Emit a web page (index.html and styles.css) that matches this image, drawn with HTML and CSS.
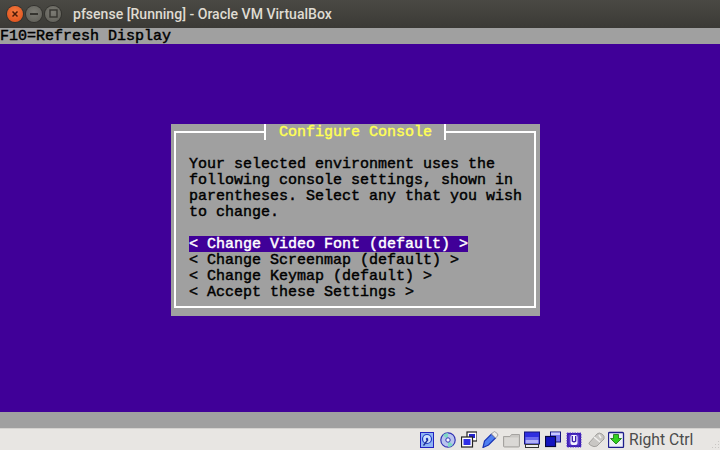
FILE: index.html
```html
<!DOCTYPE html>
<html lang="en">
<head>
<meta charset="utf-8">
<title>pfsense [Running] - Oracle VM VirtualBox</title>
<link rel="stylesheet" href="styles.css">
</head>
<body>
<div class="window">
  <header class="titlebar">
    <div class="controls">
      <span class="ctl ctl-close"><svg width="8" height="8" viewBox="0 0 8 8"><path d="M1.500 1.500l5 5M6.500 1.500l-5 5" stroke="#4a1a08" stroke-width="1.500"/></svg></span>
      <span class="ctl"><svg width="10" height="8" viewBox="0 0 10 8"><path d="M1 4h8" stroke="#35342f" stroke-width="2"/></svg></span>
      <span class="ctl"><svg width="9" height="9" viewBox="0 0 9 9"><rect x="1" y="1" width="7" height="7" fill="none" stroke="#35342f" stroke-width="1.400"/></svg></span>
    </div>
    <div class="title">pfsense [Running] - Oracle VM VirtualBox</div>
  </header>
  <main class="console">
    <div class="row row-bar">F10=Refresh Display</div>
    <div class="desktop">
      <section class="dialog">
        <div class="frame">
          <h1 class="dialog-title">Configure Console</h1>
          <p class="message">Your selected environment uses the
following console settings, shown in
parentheses. Select any that you wish
to change.</p>
          <ul class="menu">
            <li class="item selected">&lt; Change Video Font (default) &gt;</li>
            <li class="item">&lt; Change Screenmap (default) &gt;</li>
            <li class="item">&lt; Change Keymap (default) &gt;</li>
            <li class="item">&lt; Accept these Settings &gt;</li>
          </ul>
        </div>
      </section>
    </div>
    <div class="row row-bar row-empty"></div>
  </main>
  <footer class="statusbar">
    <div class="icons">
      <svg class="icon" width="15" height="17" viewBox="0 0 15 17"><rect x=".5" y="1.500" width="13" height="15" fill="#8fb4f4" stroke="#2222c0"/><circle cx="7" cy="8" r="4.500" fill="#cfe0fb" stroke="#1f3ac4" stroke-width="1.200"/><circle cx="7" cy="8" r="1.200" fill="#1f3ac4"/><path d="M3.500 14.500l4.500-6" stroke="#1c2a90" stroke-width="1.300"/></svg>
      <svg class="icon" width="16" height="17" viewBox="0 0 16 17"><circle cx="8" cy="9" r="7.200" fill="#b9c4ee" stroke="#3434b4" stroke-width="1.200"/><path d="M8 9L3 4A7 7 0 0 1 8 2zM8 9l5 5A7 7 0 0 1 8 16z" fill="#7fd8c4"/><circle cx="8" cy="9" r="2.200" fill="#f4f4ff" stroke="#3434b4"/></svg>
      <svg class="icon" width="16" height="17" viewBox="0 0 16 17"><rect x="6" y="1" width="10" height="9" fill="#fff" stroke="#222" stroke-width="1.200"/><rect x="8" y="3" width="6" height="4" fill="#2222cc"/><rect x=".5" y="6" width="11" height="10" fill="#fff" stroke="#222" stroke-width="1.200"/><rect x="2.500" y="8" width="7" height="6" fill="#3030e8"/></svg>
      <svg class="icon icon-wide" width="17" height="17" viewBox="0 0 17 17"><path d="M1 16.500L2.500 10 9.500 3l4 4-7 7z" fill="#4f80f2" stroke="#1a34b4" stroke-width="1.200"/><path d="M9.500 3l2-2q1-.8 2 0l2 2q.8 1 0 2l-2 2z" fill="#ededed" stroke="#a0a0a0"/></svg>
      <svg class="icon icon-wide" width="17" height="17" viewBox="0 0 17 17"><path d="M.5 5.500V15q0 1 1 1h14q1 0 1-1V3.500h-8L7 5.500z" fill="#c9c7c4" stroke="#a5a3a0"/><path d="M1.500 6.500h14v8.500h-14z" fill="#dad8d5"/></svg>
      <svg class="icon" width="16" height="17" viewBox="0 0 16 17"><rect x=".5" y="1" width="15" height="12" fill="#2e2ee0" stroke="#14147c"/><rect x="1.500" y="6" width="13" height="3" fill="#6a6aee"/><rect x="1.500" y="9" width="13" height="3.500" fill="#b0b0f8"/><rect x="1.500" y="13.500" width="13" height="3" fill="#ececec" stroke="#333"/></svg>
      <svg class="icon" width="16" height="17" viewBox="0 0 16 17"><rect x="5.500" y="1" width="10" height="10" fill="#7474f2" stroke="#14147c"/><rect x="6" y="1.500" width="9" height="2.500" fill="#c8c8ff"/><rect x=".5" y="5.500" width="10" height="10" fill="#1414c0" stroke="#08083c" stroke-width="1.200"/></svg>
      <svg class="icon" width="16" height="17" viewBox="0 0 16 17"><rect x="1" y="2" width="14" height="14" fill="#3414a8" stroke="#5a3ed0" stroke-dasharray="1.500 1"/><rect x="2.500" y="3.500" width="11" height="11" fill="#5c3cd0"/><rect x="4.500" y="4" width="7" height="10" rx="2" fill="#f4f4ff"/><path d="M6.300 5v5q1.700 1.700 3.400 0V5" fill="none" stroke="#3414a8" stroke-width="1.300"/></svg>
      <svg class="icon icon-xwide" width="18" height="17" viewBox="0 0 18 17"><path d="M2 12L10 3q2-2 5 0t2 5l-7 7q-3 1.500-6-.5T2 12z" fill="#c9c7c4" stroke="#a3a19e"/><path d="M7 6l6 5M12 4l2 3" stroke="#f2f1ef" stroke-width="1.500"/></svg>
      <svg class="icon" width="17" height="17" viewBox="0 0 17 17"><rect x=".5" y="1.500" width="15" height="15" rx="1" fill="#eef0fa" stroke="#1e1e8c" stroke-width="1.300"/><path d="M5.500 3.500h5v4h3L8 13 2.500 7.500h3z" fill="#30d020" stroke="#146e0e" stroke-width=".8"/></svg>
    </div>
    <span class="hostkey">Right Ctrl</span>
    <svg class="grip" width="9" height="9" viewBox="0 0 9 9"><path d="M7 1h1v1H7zM4 4h1v1H4zM7 4h1v1H7zM1 7h1v1H1zM4 7h1v1H4zM7 7h1v1H7z" fill="#c9c7c4"/></svg>
  </footer>
</div>
</body>
</html>
```

FILE: styles.css
```css
* { box-sizing: border-box; }
html, body { margin: 0; padding: 0; }
body { width: 720px; height: 450px; overflow: hidden; background: #e8e6e3; }
.window { display: flex; flex-direction: column; width: 720px; height: 450px; }

.titlebar {
  display: flex; align-items: center; height: 28px; flex: none;
  background: linear-gradient(#4a4944, #3b3a36);
  color: #dfdbd2;
}
.controls { display: flex; gap: 3px; padding-left: 7px; width: 73px; flex: none; margin-top: -1px; }
.ctl {
  display: flex; align-items: center; justify-content: center;
  width: 16px; height: 16px; border-radius: 50%;
  background: radial-gradient(circle at 50% 40%, #7c7b74, #5d5c55);
  box-shadow: 0 0 0 1px #33322e;
}
.ctl-close { background: radial-gradient(circle at 50% 35%, #f47a3e, #dc4c18); }
.title { font: 500 14.05px/28px Roboto, "Open Sans", sans-serif; white-space: nowrap; }

.console {
  display: flex; flex-direction: column; height: 400px; flex: none;
  background: #400098;
  font: 15px/16px "Liberation Mono", "DejaVu Sans Mono", monospace;
  -webkit-text-stroke: .45px currentColor;
  color: #000;
}
.row { height: 16px; padding-top: 1px; flex: none; white-space: pre; }
.row-bar { background: #a0a0a0; }
.desktop { flex: 1; padding: 80px 0 0 171px; }

.dialog { width: 369px; height: 192px; padding: 7px 4px 8px 3px; background: #a0a0a0; }
.frame { position: relative; height: 100%; border: 2px solid #fff; padding: 24px 0 0 13px; }
.dialog-title {
  position: absolute; left: 88px; top: -9px; margin: 0; height: 16px; width: 182px;
  padding: 1px 0 0 13px;
  border-left: 2px solid #fff; border-right: 2px solid #fff;
  background: #a0a0a0;
  font: inherit; color: #ffff55;
}
.message { margin: 0 0 15px; white-space: pre; }
.menu { list-style: none; margin: 0; padding: 0; }
.item { height: 16px; padding-top: 1px; white-space: pre; }
.selected { width: 279px; background: #400098; color: #fff; }

.statusbar {
  display: flex; align-items: center; height: 22px; flex: none;
  padding-left: 420px; background: #e8e6e3; border-top: 1px solid #d4d2cf;
}
.icons { display: flex; gap: 5px; }
.icon { display: block; flex: none; }
.icon-wide { margin-right: -1px; }
.icon-xwide { margin-right: -2px; }
.hostkey { margin-left: 4px; font: 15.7px/20px Roboto, "Open Sans", sans-serif; color: #4c4c4c; white-space: nowrap; }
.grip { margin-left: auto; margin-top: 10px; }
```
